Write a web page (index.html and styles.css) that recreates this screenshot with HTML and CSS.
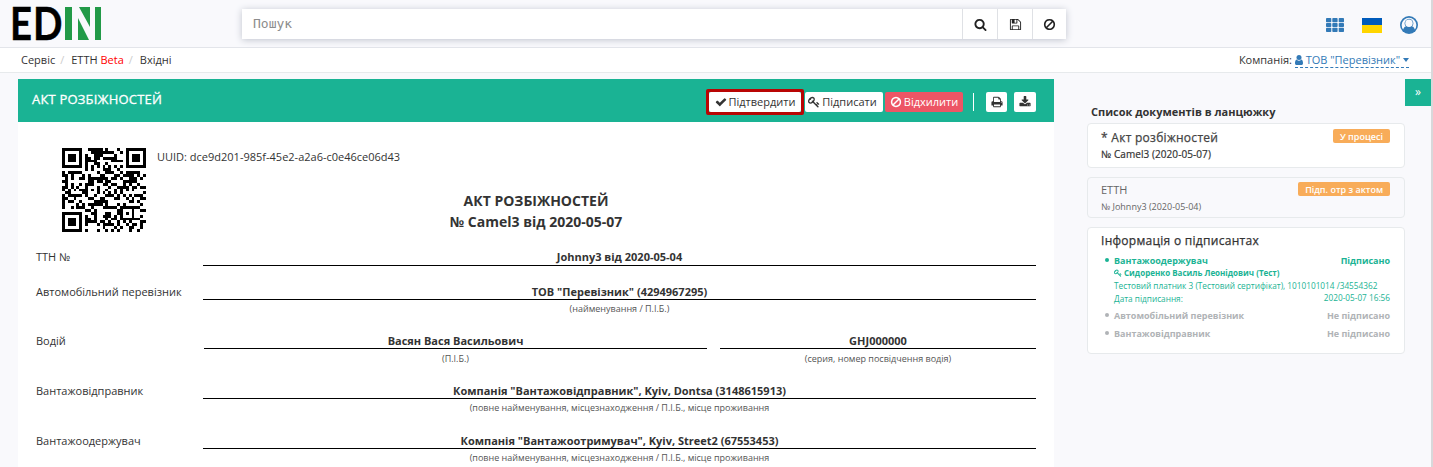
FILE: index.html
```html
<!DOCTYPE html>
<html lang="uk">
<head>
<meta charset="utf-8">
<title>Акт розбіжностей</title>
<link rel="stylesheet" href="styles.css">
</head>
<body>
<svg class="defs" width="0" height="0">
  <symbol id="check" viewBox="0 0 1792 1792"><path d="M1671 566q0 40-28 68l-724 724-136 136q-28 28-68 28t-68-28l-136-136-362-362q-28-28-28-68t28-68l136-136q28-28 68-28t68 28l294 295 656-657q28-28 68-28t68 28l136 136q28 28 28 68z"/></symbol>
  <symbol id="search" viewBox="0 0 1792 1792"><path d="M1216 832q0-185-131.5-316.5t-316.5-131.5-316.5 131.5-131.5 316.5 131.5 316.5 316.5 131.5 316.5-131.5 131.5-316.5zm512 832q0 52-38 90t-90 38q-54 0-90-38l-343-342q-179 124-399 124-143 0-273.5-55.5t-225-150-150-225-55.5-273.5 55.5-273.5 150-225 225-150 273.5-55.5 273.5 55.5 225 150 150 225 55.5 273.5q0 220-124 399l343 343q37 37 37 90z"/></symbol>
  <symbol id="ban" viewBox="0 0 1792 1792"><path d="M1440 893q0-161-87-295l-754 753q137 89 297 89 111 0 211.500-43.500t173.500-116.500 116-174.500 43-212.500zm-999 299l755-754q-135-91-300-91-148 0-273 73t-198 199-73 274q0 162 89 299zm1223-299q0 157-61 300t-163.500 246-245 164-298.500 61-298.500-61-245-164-163.500-246-61-300 61-299.500 163.500-245.500 245-164 298.500-61 298.500 61 245 164 163.500 245.500 61 299.500z"/></symbol>
  <symbol id="save" viewBox="0 0 1792 1792"><path d="M512 1536h768v-384h-768v384zm896 0h128v-896q0-14-10-38.500t-20-34.500l-281-281q-10-10-34-20t-39-10v416q0 40-28 68t-68 28h-576q-40 0-68-28t-28-68v-416h-128v1280h128v-416q0-40 28-68t68-28h832q40 0 68 28t28 68v416zm-384-928v-320q0-13-9.500-22.500t-22.500-9.500h-192q-13 0-22.500 9.500t-9.500 22.500v320q0 13 9.500 22.500t22.500 9.500h192q13 0 22.500-9.500t9.500-22.500zm640 32v928q0 40-28 68t-68 28h-1344q-40 0-68-28t-28-68v-1344q0-40 28-68t68-28h928q40 0 88 20t76 48l280 280q28 28 48 76t20 88z"/></symbol>
  <symbol id="print" viewBox="0 0 1792 1792"><path d="M448 1536h896v-256h-896v256zm0-640h896v-384h-160q-40 0-68-28t-28-68v-160h-640v640zm1152 64q0-26-19-45t-45-19-45 19-19 45 19 45 45 19 45-19 19-45zm128 0v416q0 13-9.500 22.500t-22.500 9.500h-224v160q0 40-28 68t-68 28h-960q-40 0-68-28t-28-68v-160h-224q-13 0-22.500-9.500t-9.500-22.500v-416q0-79 56.500-135.500t135.500-56.500h64v-544q0-40 28-68t68-28h672q40 0 88 20t76 48l152 152q28 28 48 76t20 88v256h64q79 0 135.500 56.500t56.500 135.500z"/></symbol>
  <symbol id="download" viewBox="0 0 1792 1792"><path d="M1344 1344q0-26-19-45t-45-19-45 19-19 45 19 45 45 19 45-19 19-45zm256 0q0-26-19-45t-45-19-45 19-19 45 19 45 45 19 45-19 19-45zm128-224v320q0 40-28 68t-68 28h-1472q-40 0-68-28t-28-68v-320q0-40 28-68t68-28h465l135 136q58 56 136 56t136-56l136-136h464q40 0 68 28t28 68zm-325-569q17 41-14 70l-448 448q-18 19-45 19t-45-19l-448-448q-31-29-14-70 17-39 59-39h256v-448q0-26 19-45t45-19h256q26 0 45 19t19 45v448h256q42 0 59 39z"/></symbol>
  <symbol id="key" viewBox="0 0 1792 1792"><path d="M832 512q0-80-56-136t-136-56-136 56-56 136q0 42 19 83-41-19-83-19-80 0-136 56t-56 136 56 136 136 56 136-56 56-136q0-42-19-83 41 19 83 19 80 0 136-56t56-136zm851 704q0 17-49 66t-66 49q-9 0-28.500-16t-36.500-33-38.500-40-24.500-26l-96 96 220 220q28 28 28 68 0 42-39 81t-81 39q-40 0-68-28l-671-671q-176 131-365 131-163 0-265.500-102.500t-102.500-265.500q0-160 95-313t248-248 313-95q163 0 265.500 102.500t102.500 265.500q0 189-131 365l355 355 96-96q-3-3-26-24.500t-40-38.500-33-36.500-16-28.500q0-17 49-66t66-49q13 0 23 10 6 6 46 44.500t82 79.500 86.500 86 73 78 28.500 41z"/></symbol>
</svg>

<header class="topbar">
  <svg class="logo" width="90" height="36" viewBox="0 0 90 36">
    <text class="logo-text" x="-3" y="34" textLength="22" lengthAdjust="spacingAndGlyphs">E</text>
    <text class="logo-text" x="20" y="34" textLength="29.500" lengthAdjust="spacingAndGlyphs">D</text>
    <g fill="#229a48"><rect x="52" y="1" width="7" height="33"/><rect x="82" y="1" width="6" height="33"/><path d="M66 1h11v20zM65 12l11 22h-11z"/></g>
  </svg>
  <div class="search">
    <span class="search-input">Пошук</span>
    <span class="search-btn"><svg class="ic"><use href="#search"/></svg></span>
    <span class="search-btn"><svg class="ic"><use href="#save"/></svg></span>
    <span class="search-btn last"><svg class="ic"><use href="#ban"/></svg></span>
  </div>
  <div class="tools">
    <svg class="grid-ic" width="18" height="14" viewBox="0 0 18 14" fill="#337ab7"><g id="gr"><rect width="5.300" height="4.200" rx=".8"/><rect x="6.300" width="5.300" height="4.200" rx=".8"/><rect x="12.700" width="5.300" height="4.200" rx=".8"/></g><use href="#gr" y="4.900"/><use href="#gr" y="9.800"/></svg>
    <span class="flag"></span>
    <svg width="18" height="18" viewBox="0 0 18 18"><circle cx="9" cy="9" r="9" fill="#337ab7"/><path d="M3.200 13.500a7.300 7.300 0 1 1 11.600 0c-.4-1.700-1.200-2.900-2.700-3.100A4.500 4.500 0 0 0 13.400 7.200a4.400 4.400 0 1 0-7.500 3.200c-1.500.2-2.300 1.400-2.700 3.100z" fill="#f9f9fc"/><circle cx="9" cy="7.200" r="3.700" fill="#f9f9fc"/></svg>
  </div>
</header>

<nav class="crumbs">
  <span>Сервіс</span><i>/</i><span>ЕТТН <b>Beta</b></span><i>/</i><span>Вхідні</span>
  <div class="company">Компанія: <a><svg width="8" height="10" viewBox="0 0 8 10" fill="#337ab7"><circle cx="4" cy="2.600" r="2.500"/><path d="M1.600 4.600C.4 5 0 6.800 0 8.200 0 9.300.7 10 1.600 10h4.800C7.300 10 8 9.300 8 8.200 8 6.800 7.600 5 6.400 4.600a3.300 3.300 0 0 1-4.800 0z"/></svg> ТОВ "Перевізник" <span class="caret"></span></a></div>
</nav>

<div class="content">
  <main class="doc">
    <div class="doc-head">
      <h1>АКТ РОЗБІЖНОСТЕЙ</h1>
      <div class="mark"><span class="btn confirm"><svg class="ic"><use href="#check"/></svg>Підтвердити</span></div>
      <span class="btn sign"><svg class="ic"><use href="#key"/></svg>Підписати</span>
      <span class="btn danger"><svg class="ic"><use href="#ban"/></svg>Відхилити</span>
      <span class="sep"></span>
      <span class="btn sq"><svg class="ic"><use href="#print"/></svg></span>
      <span class="btn sq"><svg class="ic"><use href="#download"/></svg></span>
    </div>
    <div class="doc-body">
      <div class="ident"><svg id="qr" width="84" height="84" viewBox="0 0 29 29" shape-rendering="crispEdges"></svg><span>UUID: <span id="uuid">dce9d201-985f-45e2-a2a6-c0e46ce06d43</span></span></div>
      <h2>АКТ РОЗБІЖНОСТЕЙ<br>№ Camel3 від 2020-05-07</h2>
      <div class="row first"><label>ТТН №</label><div class="val"><b>Johnny3 від 2020-05-04</b></div></div>
      <div class="row r2"><label>Автомобільний перевізник</label><div class="val"><b>ТОВ "Перевізник" (4294967295)</b><small>(найменування / П.І.Б.)</small></div></div>
      <div class="row split"><label>Водій</label><div class="val"><b>Васян Вася Васильович</b><small>(П.І.Б.)</small></div><div class="val"><b>GHJ000000</b><small>(серия, номер посвідчення водія)</small></div></div>
      <div class="row"><label>Вантажовідправник</label><div class="val"><b>Компанія "Вантажовідправник", Kyiv, Dontsa (3148615913)</b><small>(повне найменування, місцезнаходження / П.І.Б., місце проживання</small></div></div>
      <div class="row"><label>Вантажоодержувач</label><div class="val"><b>Компанія "Вантажоотримувач", Kyiv, Street2 (67553453)</b><small>(повне найменування, місцезнаходження / П.І.Б., місце проживання</small></div></div>
    </div>
  </main>

  <aside class="side">
    <h3>Список документів в ланцюжку</h3>
    <section class="card current">
      <div class="line"><span class="name">* Акт розбіжностей</span><span class="badge">У процесі</span></div>
      <div class="num">№ Camel3 (2020-05-07)</div>
    </section>
    <section class="card prev">
      <div class="line"><span class="name">ЕТТН</span><span class="badge">Підп. отр з актом</span></div>
      <div class="num">№ Johnny3 (2020-05-04)</div>
    </section>
    <section class="card signers">
      <h4>Інформація о підписантах</h4>
      <div class="line strong ok"><span class="dot">Вантажоодержувач</span><span>Підписано</span></div>
      <div class="detail who"><svg class="ic"><use href="#key"/></svg>Сидоренко Василь Леонідович (Тест)</div>
      <div class="detail cert">Тестовий платник 3 (Тестовий сертифікат), 1010101014 /34554362</div>
      <div class="detail line when"><span>Дата підписання:</span><span class="date">2020-05-07 16:56</span></div>
      <div class="line strong no"><span class="dot">Автомобільний перевізник</span><span>Не підписано</span></div>
      <div class="line strong no"><span class="dot">Вантажовідправник</span><span>Не підписано</span></div>
    </section>
  </aside>
  <span class="collapse">»</span>
</div>
<div class="scroll"></div>
<script src="qr.js"></script>
</body>
</html>
```
FILE: styles.css
```css
* { box-sizing: border-box; }
body { margin: 0; height: 467px; overflow: hidden; background: #f9f9fc; color: #333; font: 11px/15px "Open Sans", "Noto Sans", sans-serif; }
.defs { position: absolute; }
h1, h2, h3, h4 { margin: 0; font-weight: 600; }
.ic { width: 12px; height: 12px; fill: currentColor; flex: none; }

.topbar { display: flex; height: 48px; padding: 6px 15px 0 13px; border-bottom: 1px solid #e3e5ea; }
.logo { flex: none; overflow: visible; }
.logo-text { font: 700 46px Lato, sans-serif; fill: #000; stroke: #000; stroke-width: .4px; }
.search { display: flex; width: 824px; height: 30px; margin: 3px 0 0 139px; background: #fff; box-shadow: 0 1px 7px #bfc3cd; }
.search-input { flex: 1; padding: 7px 11px; color: #8c8c8c; font: 13px/16px "DejaVu Sans Mono", monospace; }
.search-btn { display: flex; width: 35px; align-items: center; justify-content: center; border-left: 1px solid #dfe1e5; color: #222; }
.search-btn.last { width: 34px; }
.search-btn .ic { width: 13px; height: 13px; }
.tools { display: flex; align-items: flex-start; margin-left: auto; padding-top: 10px; }
.grid-ic { margin: 2px 18px 0 0; }
.flag { width: 20px; height: 15px; margin: 2px 18px 0 0; background: linear-gradient(#005bbb 50%, #ffd500 50%); }

.crumbs { display: flex; height: 25px; padding: 0 24px 1px 21px; align-items: center; background: #fff; border-bottom: 1px solid #e7eaec; }
.crumbs i { margin: 0 7px 0 5px; color: #ccc; font-style: normal; }
.crumbs b { color: #f00; font-weight: 400; }
.company { margin-left: auto; }
.company a { display: inline-block; height: 16px; border-bottom: 1px dashed #337ab7; color: #337ab7; }
.company svg { vertical-align: -1px; }
.caret { display: inline-block; border: 3.500px solid transparent; border-top: 4px solid #337ab7; border-bottom: 0; vertical-align: 2px; }

.content { display: flex; height: 394px; padding: 6px 2px 0 18px; }
.doc { width: 1036px; flex: none; background: #fff; }
.doc-head { display: flex; height: 43px; padding: 0 18px 0 14px; align-items: center; background: #1ab394; }
.doc-head h1 { margin-right: auto; padding-bottom: 2px; color: #fff; font-size: 13px; font-weight: 400; letter-spacing: .2px; -webkit-text-stroke: .3px; }
.mark { display: flex; margin: 2px 1px 0 0; border: 3px solid #b90504; border-radius: 2px; }
.btn { display: flex; height: 20px; margin-top: 2px; align-items: center; justify-content: center; gap: 2px; border-radius: 2px; background: #fff; color: #333; white-space: nowrap; }
.confirm { width: 92px; margin: 0; }
.sign { width: 78px; margin-right: 2px; padding-right: 3px; }
.danger { width: 78px; background: #ed5565; color: #fff; }
.sep { width: 1px; height: 18px; margin: 2px 12px 0 10px; background: #fff; }
.sq { width: 21px; }
.sq + .sq { width: 22px; margin-left: 7px; }

.doc-body { height: 345px; padding: 26px 18px 0; overflow: hidden; }
.ident { display: flex; height: 42px; padding-left: 26px; gap: 11px; line-height: 18px; }
.ident > svg { flex: none; }
.doc-body h2 { height: 59px; font-size: 14px; line-height: 21px; font-weight: 700; text-align: center; color: #333; }
.row { display: grid; grid-template-columns: 167px 1fr; height: 50px; text-align: center; }
.row label { text-align: left; }
.row b { display: block; height: 16px; border-bottom: 1px solid #000; font-weight: 700; }
.row small { display: block; font-size: 9px; line-height: 18px; color: #555; }
.first { height: 35px; line-height: 16px; }
.first b { height: 17px; }
.r2 { height: 49px; }
.split { grid-template-columns: 155px 503px 316px; column-gap: 13px; }
.split small { line-height: 20px; }

.side { width: 318px; margin: 25px 0 0 33px; }
.side h3 { padding-left: 4px; height: 19px; font-size: 11px; font-weight: 700; }
.card { padding: 0 14px 0 13px; border: 1px solid #e7eaec; border-radius: 4px; }
.line { display: flex; justify-content: space-between; }
.card.current { height: 45px; margin-bottom: 9px; padding-top: 5px; background: #fff; }
.current .name { font-size: 12px; line-height: 18px; color: #444; letter-spacing: .28px; -webkit-text-stroke: .25px; }
.current .num { font-size: 10px; letter-spacing: .07px; -webkit-text-stroke: .2px; }
.card.prev { height: 41px; margin-bottom: 9px; padding-top: 4px; color: #666; }
.prev .num { font-size: 9px; line-height: 19px; }
.badge { height: 14px; padding: 0 7px; border-radius: 2px; background: #f8ac59; color: #fff; font-size: 9px; font-weight: 600; line-height: 15px; }
.signers { height: 127px; padding-top: 5px; background: #fff; }
.signers h4 { height: 21px; font-size: 12px; font-weight: 400; line-height: 16px; letter-spacing: .28px; -webkit-text-stroke: .25px; }
.strong { height: 18px; font-size: 9px; line-height: 14px; font-weight: 700; }
.strong.ok { height: 12px; }
.ok, .detail { color: #1ab394; }
.no { color: #b0b3b6; }
.dot::before { content: ""; display: inline-block; width: 4px; height: 4px; margin: 0 5px 2px 4px; border-radius: 50%; background: currentColor; }
.detail { padding-left: 13px; height: 13px; font-size: 8.250px; line-height: 13px; white-space: nowrap; }
.who { font-size: 8px; font-weight: 700; }
.who .ic { width: 8px; height: 8px; margin-right: 2px; vertical-align: -1px; }
.when { height: 17px; }
.date { line-height: 12px; }
.collapse { width: 26px; height: 27px; margin-left: auto; background: #1ab394; color: #fff; text-align: center; font-size: 12px; line-height: 26px; }
.scroll { position: absolute; top: 0; right: 0; width: 2px; height: 467px; background: #d8d8da; }
```
FILE: qr.js
```js
// QR code, version 3, level M, mask 2, byte mode: draws the document's UUID.
(function () {
  const N = 29, DATA = 44, EC = 26, FORMAT = 0b101111001111100;
  const bytes = [...document.getElementById('uuid').textContent].map(c => c.charCodeAt(0));

  const bits = [];
  const put = (v, n) => { for (let i = n - 1; i >= 0; i--) bits.push((v >> i) & 1); };
  put(4, 4); put(bytes.length, 8); bytes.forEach(b => put(b, 8)); put(0, 4);
  const words = [];
  for (let i = 0; i < bits.length; i += 8) words.push(parseInt(bits.slice(i, i + 8).join(''), 2));
  for (let p = 0xec; words.length < DATA; p ^= 0xec ^ 0x11) words.push(p);

  const mul = (a, b) => { let r = 0; for (; b; b >>= 1) { if (b & 1) r ^= a; a <<= 1; if (a & 256) a ^= 0x11d; } return r; };
  let gen = [1], root = 1;
  for (let i = 0; i < EC; i++) {
    const next = new Array(gen.length + 1).fill(0);
    gen.forEach((g, j) => { next[j] ^= g; next[j + 1] ^= mul(g, root); });
    gen = next; root = mul(root, 2);
  }
  const rem = words.concat(new Array(EC).fill(0));
  for (let i = 0; i < DATA; i++) { const f = rem[i]; if (f) gen.forEach((g, j) => { rem[i + j] ^= mul(g, f); }); }
  const stream = [];
  words.concat(rem.slice(DATA)).forEach(w => { for (let i = 7; i >= 0; i--) stream.push((w >> i) & 1); });

  const m = Array.from({ length: N }, () => new Array(N).fill(-1));
  const set = (r, c, v) => { if (r >= 0 && c >= 0 && r < N && c < N) m[r][c] = v ? 1 : 0; };
  [[3, 3], [3, N - 4], [N - 4, 3]].forEach(([y, x]) => {
    for (let a = -4; a <= 4; a++) for (let b = -4; b <= 4; b++) { const d = Math.max(Math.abs(a), Math.abs(b)); set(y + a, x + b, d !== 2 && d !== 4); }
  });
  for (let a = -2; a <= 2; a++) for (let b = -2; b <= 2; b++) set(22 + a, 22 + b, Math.max(Math.abs(a), Math.abs(b)) !== 1);
  for (let i = 8; i < N - 8; i++) { set(6, i, i % 2 === 0); set(i, 6, i % 2 === 0); }
  const fb = i => (FORMAT >> i) & 1;
  for (let i = 0; i < 6; i++) set(i, 8, fb(i));
  set(7, 8, fb(6)); set(8, 8, fb(7)); set(8, 7, fb(8));
  for (let i = 9; i < 15; i++) set(8, 14 - i, fb(i));
  for (let i = 0; i < 8; i++) set(8, N - 1 - i, fb(i));
  for (let i = 8; i < 15; i++) set(N - 15 + i, 8, fb(i));
  set(N - 8, 8, 1);
  let k = 0, up = true;
  for (let c = N - 1; c > 0; c -= 2) {
    if (c === 6) c--;
    for (let i = 0; i < N; i++) {
      const r = up ? N - 1 - i : i;
      for (const x of [c, c - 1]) if (m[r][x] < 0) m[r][x] = (stream[k++] || 0) ^ (x % 3 === 0 ? 1 : 0);
    }
    up = !up;
  }

  let d = '';
  m.forEach((row, r) => row.forEach((v, c) => { if (v) d += `M${c} ${r}h1v1h-1z`; }));
  const path = document.createElementNS('http://www.w3.org/2000/svg', 'path');
  path.setAttribute('d', d);
  document.getElementById('qr').appendChild(path);
})();
```
